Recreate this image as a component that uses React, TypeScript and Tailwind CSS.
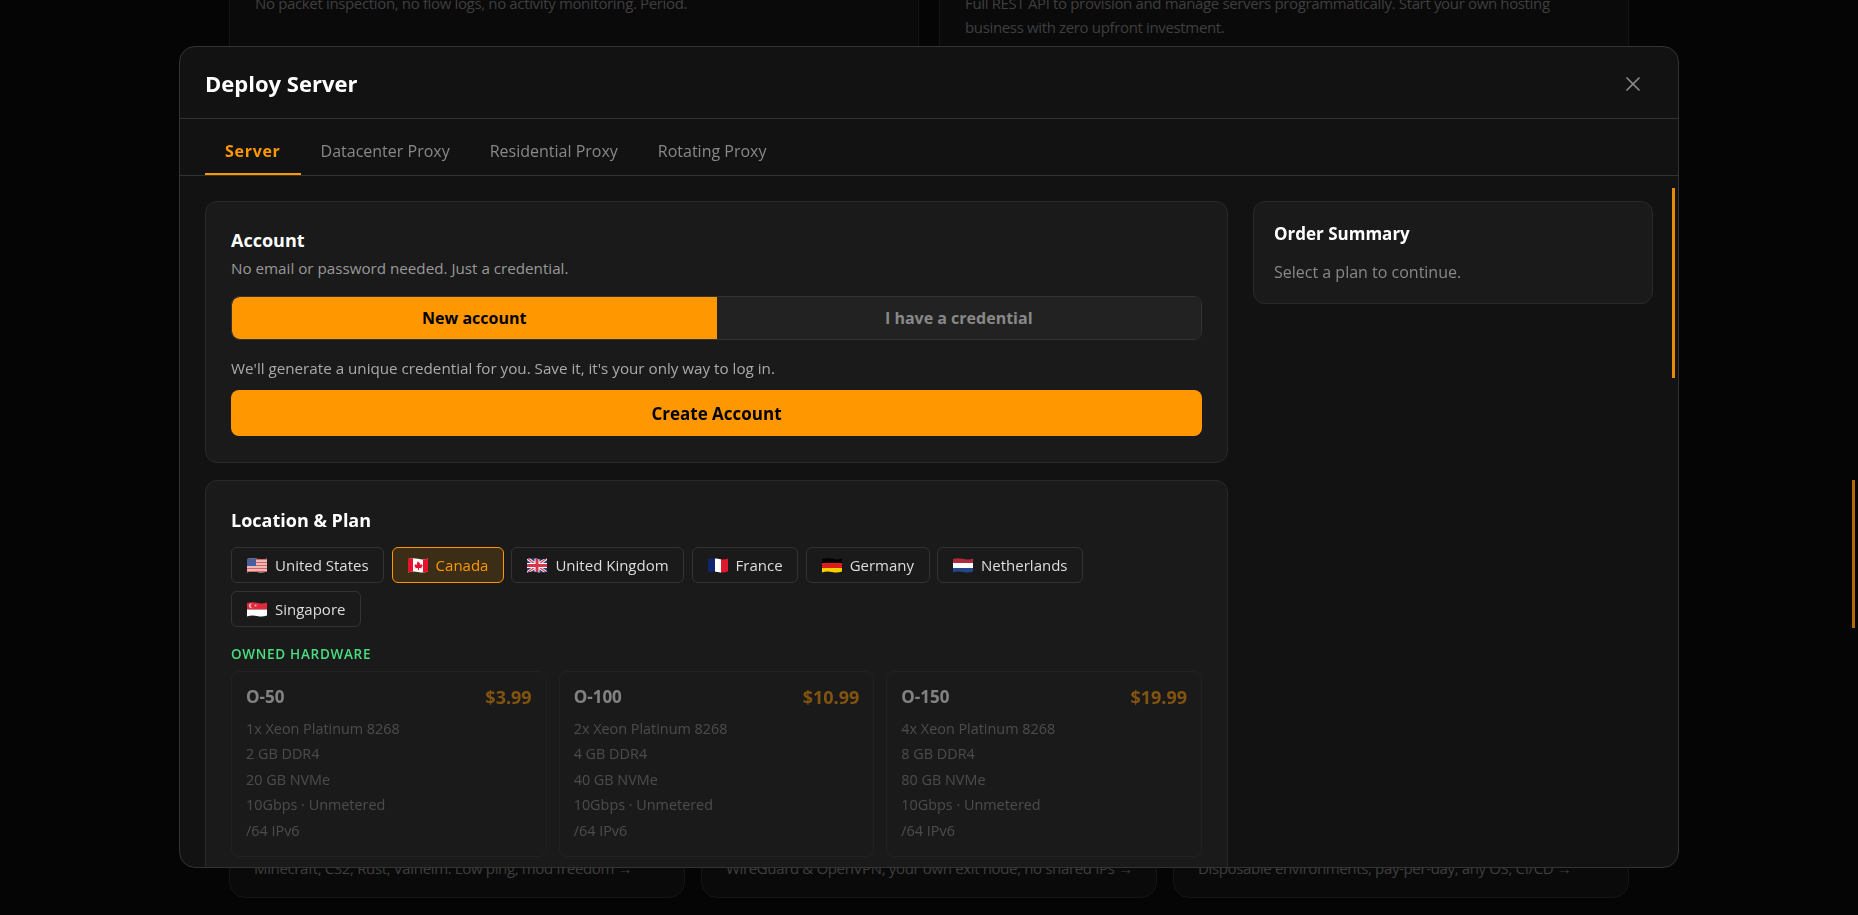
import { X } from 'lucide-react';
import type { ReactNode } from 'react';

const tabs = ['Server', 'Datacenter Proxy', 'Residential Proxy', 'Rotating Proxy'];

function Flag({ code }: { code: string }) {
  return (
    <svg viewBox="0 0 20 15" className="w-5 h-[15px] shrink-0">
      <clipPath id={`wave-${code}`}>
        <path d="M0 1Q5-.6 10 .8T20 .6V13.6Q15 15.4 10 14T0 14.4Z" />
      </clipPath>
      <g clipPath={`url(#wave-${code})`}>{flags[code]}</g>
    </svg>
  );
}

const flags: Record<string, ReactNode> = {
  us: (
    <>
      <rect width="20" height="15" fill="#f3d6d6" />
      <path d="M0 1.5h20M0 4.5h20M0 7.5h20M0 10.5h20M0 13.5h20" stroke="#d9615f" strokeWidth="1.4" />
      <rect width="9" height="8" fill="#4a5f9a" />
    </>
  ),
  ca: (
    <>
      <rect width="20" height="15" fill="#fff" />
      <rect width="5" height="15" fill="#e8112d" />
      <rect x="15" width="5" height="15" fill="#e8112d" />
      <path d="M10 3l1 2 1.2-.5-.4 2.6 1.7-1 .4 1.2 1 .2-1.4 1.8.3 1-2.8-.4.1 2H9.9l.1-2-2.8.4.3-1-1.4-1.8 1-.2.4-1.2 1.7 1-.4-2.6L9 5z" fill="#e8112d" />
    </>
  ),
  uk: (
    <>
      <rect width="20" height="15" fill="#2b3f87" />
      <path d="M0 0l20 15M20 0L0 15" stroke="#fff" strokeWidth="3" />
      <path d="M0 0l20 15M20 0L0 15" stroke="#d8344a" strokeWidth="1.2" />
      <path d="M10 0v15M0 7.5h20" stroke="#fff" strokeWidth="5" />
      <path d="M10 0v15M0 7.5h20" stroke="#d8344a" strokeWidth="3" />
    </>
  ),
  fr: (
    <>
      <rect width="7" height="15" fill="#10256e" />
      <rect x="7" width="6" height="15" fill="#fff" />
      <rect x="13" width="7" height="15" fill="#e0182d" />
    </>
  ),
  de: (
    <>
      <rect width="20" height="5" fill="#000" />
      <rect y="5" width="20" height="5" fill="#dd1c1c" />
      <rect y="10" width="20" height="5" fill="#ffce00" />
    </>
  ),
  nl: (
    <>
      <rect width="20" height="5" fill="#ae2a3c" />
      <rect y="5" width="20" height="5" fill="#fff" />
      <rect y="10" width="20" height="5" fill="#24468c" />
    </>
  ),
  sg: (
    <>
      <rect width="20" height="7.5" fill="#e2293b" />
      <rect y="7.5" width="20" height="7.5" fill="#fff" />
      <circle cx="4.5" cy="3.8" r="2.4" fill="#fff" />
      <circle cx="5.5" cy="3.8" r="2.2" fill="#e2293b" />
      <circle cx="8.5" cy="3.5" r="1.1" fill="#f7a9ae" />
    </>
  ),
};

const countries = [
  { code: 'us', name: 'United States' },
  { code: 'ca', name: 'Canada', active: true },
  { code: 'uk', name: 'United Kingdom' },
  { code: 'fr', name: 'France' },
  { code: 'de', name: 'Germany' },
  { code: 'nl', name: 'Netherlands' },
  { code: 'sg', name: 'Singapore' },
];

const plans = [
  { name: 'O-50', price: '$3.99', specs: ['1x Xeon Platinum 8268', '2 GB DDR4', '20 GB NVMe', '10Gbps · Unmetered', '/64 IPv6'] },
  { name: 'O-100', price: '$10.99', specs: ['2x Xeon Platinum 8268', '4 GB DDR4', '40 GB NVMe', '10Gbps · Unmetered', '/64 IPv6'] },
  { name: 'O-150', price: '$19.99', specs: ['4x Xeon Platinum 8268', '8 GB DDR4', '80 GB NVMe', '10Gbps · Unmetered', '/64 IPv6'] },
];

function Background() {
  return (
    <div className="h-screen overflow-hidden bg-[#050505] flex flex-col justify-between">
      <div className="w-[1400px] mx-auto grid grid-cols-2 gap-5 mt-[-35px]">
        <div className="h-[200px] border border-[#151515] rounded-2xl bg-[#0a0a0a] p-[25px] text-[15px] leading-6 text-[#3f3f3f] tracking-[-0.35px]">
          No packet inspection, no flow logs, no activity monitoring. Period.
        </div>
        <div className="h-[200px] border border-[#151515] rounded-2xl bg-[#0a0a0a] p-[25px] text-[15px] leading-6 text-[#3f3f3f] tracking-[-0.35px]">
          Full REST API to provision and manage servers programmatically. Start your own hosting
          business with zero upfront investment.
        </div>
      </div>
      <div className="w-[1400px] mx-auto grid grid-cols-3 gap-4 mb-[17px]">
        {[
          'Minecraft, CS2, Rust, Valheim. Low ping, mod freedom →',
          'WireGuard & OpenVPN, your own exit node, no shared IPs →',
          'Disposable environments, pay-per-day, any OS, CI/CD →',
        ].map((text) => (
          <div
            key={text}
            className="h-[120px] border border-[#151515] rounded-2xl bg-[#0a0a0a] px-[24px] pb-[17px] flex items-end whitespace-nowrap text-[15px] leading-6 text-[#3f3f3f] tracking-[-0.35px]"
          >
            {text}
          </div>
        ))}
      </div>
    </div>
  );
}

function Modal() {
  return (
    <div className="relative w-[1500px] h-[822px] bg-[#121212] border border-[#333] rounded-2xl overflow-hidden flex flex-col">
      <div className="h-[72px] shrink-0 flex items-center justify-between px-[25px] pt-[2px] border-b border-[#333]">
        <h2 className="text-[22px] font-bold text-white">Deploy Server</h2>
        <button className="w-10 h-10 flex items-center justify-center text-[#888]">
          <X size={24} strokeWidth={1.75} />
        </button>
      </div>

      <div className="h-[57px] shrink-0 flex px-[25px] border-b border-[#333]">
        {tabs.map((tab, i) => (
          <button
            key={tab}
            className={`h-[56px] px-5 pt-[10px] border-b-2 text-[16px] ${
              i === 0 ? 'border-[#ff9800] text-[#ff9800] font-bold tracking-[0.7px]' : 'border-transparent text-[#888]'
            }`}
          >
            {tab}
          </button>
        ))}
      </div>

      <div className="flex-1 overflow-hidden p-[25px]">
        <div className="grid grid-cols-[1fr_400px] gap-[25px] items-start">
          <div className="flex flex-col gap-[17px]">
            <section className="bg-[#1a1a1a] border border-[#2a2a2a] rounded-xl px-[25px] pt-[25px] pb-[26px]">
              <h3 className="text-[18px] leading-[26px] font-bold text-white">Account</h3>
              <p className="mt-[3px] text-[15.2px] leading-6 text-[#999]">
                No email or password needed. Just a credential.
              </p>
              <div className="mt-4 h-[44px] flex border border-[#333] rounded-lg overflow-hidden">
                <button className="flex-1 bg-[#ff9800] text-black text-[16px] font-bold rounded-l-lg">
                  New account
                </button>
                <button className="flex-1 bg-[#222] text-[#888] text-[16px] font-bold">
                  I have a credential
                </button>
              </div>
              <p className="mt-4 text-[15.2px] leading-6 text-[#aaa]">
                We'll generate a unique credential for you. Save it, it's your only way to log in.
              </p>
              <button className="mt-[10px] w-full h-[46px] pt-px bg-[#ff9800] rounded-lg text-black text-[17px] font-bold">
                Create Account
              </button>
            </section>

            <section className="bg-[#1a1a1a] border border-[#2a2a2a] rounded-xl p-[25px] pb-10">
              <h3 className="text-[18px] leading-7 font-bold text-white">Location &amp; Plan</h3>
              <div className="mt-[13px] flex flex-wrap gap-y-2 gap-x-[7.5px]">
                {countries.map((c) => (
                  <button
                    key={c.name}
                    className={`h-9 pl-[15px] pr-[14.5px] flex items-center gap-[8px] border rounded-md text-[15px] ${
                      c.active
                        ? 'border-[#ff9800] bg-[#ff9800]/15 text-[#ff9800]'
                        : 'border-[#333] text-[#ddd]'
                    }`}
                  >
                    <Flag code={c.code} />
                    {c.name}
                  </button>
                ))}
              </div>
              <div className="mt-[17px] text-[13.5px] leading-5 font-semibold uppercase tracking-[0.7px] text-[#4ade80]">
                Owned Hardware
              </div>
              <div className="mt-[7px] grid grid-cols-3 gap-3">
                {plans.map((plan) => (
                  <div key={plan.name} className="h-[186px] border border-[#2a2a2a] rounded-lg px-[14px] pt-[15px] opacity-[.45]">
                    <div className="flex items-center justify-between">
                      <span className="text-[17px] leading-5 font-bold text-white">{plan.name}</span>
                      <span className="text-[18px] leading-5 font-bold text-[#ff9800]">{plan.price}</span>
                    </div>
                    <div className="mt-[9px] text-[14.4px] leading-[25.4px] text-[#888]">
                      {plan.specs.map((s) => (
                        <div key={s}>{s}</div>
                      ))}
                    </div>
                  </div>
                ))}
              </div>
            </section>
          </div>

          <aside className="h-[103px] bg-[#1a1a1a] border border-[#2a2a2a] rounded-xl p-5">
            <h3 className="text-[17px] leading-6 font-bold text-white">Order Summary</h3>
            <p className="mt-[14px] text-[16px] leading-6 text-[#888]">Select a plan to continue.</p>
          </aside>
        </div>
      </div>

      <div className="absolute right-[3px] top-[141px] w-[3px] h-[190px] bg-[#e88a00]" />
    </div>
  );
}

export default function App() {
  return (
    <div className="relative font-['Open_Sans','Noto_Sans',sans-serif]">
      <Background />
      <div className="fixed inset-0 flex justify-center items-start pt-[46px]">
        <Modal />
      </div>
      <div className="fixed right-[3px] top-[480px] w-[3px] h-[148px] bg-[#b36b00]" />
    </div>
  );
}
